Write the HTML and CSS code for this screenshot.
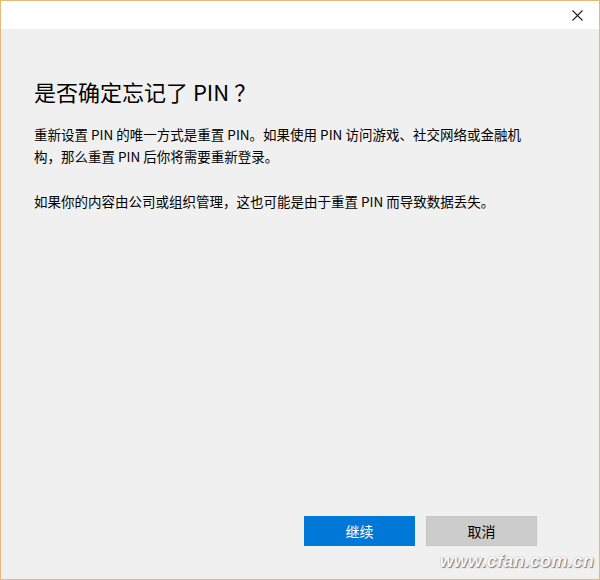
FILE: index.html
```html
<!DOCTYPE html>
<html lang="zh-CN">
<head>
    <meta charset="UTF-8">
    <title>是否确定忘记了 PIN？</title>
    <link rel="stylesheet" href="styles.css">
</head>
<body>

    <div class="window">
        <div class="titlebar">
            <span class="close">
                <svg width="11" height="11" viewBox="0 0 11 11"><path d="M0.5 0.5 L10.5 10.5 M10.5 0.5 L0.5 10.5" stroke="#222" stroke-width="1.1" fill="none"/></svg>
            </span>
        </div>

        <div class="content">
            <h1 class="title">是否确定忘记了 PIN ？</h1>
            <p class="text">重新设置 PIN 的唯一方式是重置 PIN。如果使用 PIN 访问游戏、社交网络或金融机构，那么重置 PIN 后你将需要重新登录。</p>
            <p class="text">如果你的内容由公司或组织管理，这也可能是由于重置 PIN 而导致数据丢失。</p>
        </div>

        <div class="footer">
            <button class="btn primary">继续</button>
            <button class="btn">取消</button>
        </div>

        <div class="mark">www.cfan.com.cn</div>
    </div>

</body>
</html>
```

FILE: styles.css
```css
body {
    margin: 0;
    font-family: "Noto Sans CJK SC", "Noto Sans", sans-serif;
}
.window {
    position: relative;
    width: 600px;
    height: 580px;
    box-sizing: border-box;
    border: 1px solid #e9b878;
    background: #f0f0f0;
    display: flex;
    flex-direction: column;
}
.titlebar {
    height: 28px;
    background: #fff;
    display: flex;
    justify-content: flex-end;
    align-items: center;
    padding-right: 16px;
}
.close {
    display: flex;
}
.content {
    flex: 1;
    padding: 0 33px;
}
.title {
    font-size: 22px;
    font-weight: normal;
    color: #000;
    margin: 47px 0 17px;
    line-height: 30px;
}
.text {
    width: 500px;
    font-size: 13.5px;
    line-height: 22px;
    color: #000;
    margin: 0 0 23px;
}
.footer {
    display: flex;
    justify-content: flex-end;
    gap: 11px;
    padding: 0 62px 33px 0;
}
.btn {
    width: 111px;
    height: 30px;
    border: 1px solid #c6c6c6;
    background: #cccccc;
    color: #000;
    font-family: inherit;
    font-size: 14px;
    padding: 0;
}
.btn.primary {
    background: #0078d7;
    border-color: #0078d7;
    color: #fff;
}
/* водяной знак в углу */
.mark {
    position: absolute;
    right: 5px;
    bottom: 8px;
    font-family: "Liberation Sans", sans-serif;
    font-style: italic;
    font-weight: bold;
    font-size: 18px;
    line-height: 20px;
    color: #f8f8f8;
    text-shadow: 1px 1px 1px #7a7a7a, 0 0 1px #999;
    letter-spacing: 0.2px;
}
```
